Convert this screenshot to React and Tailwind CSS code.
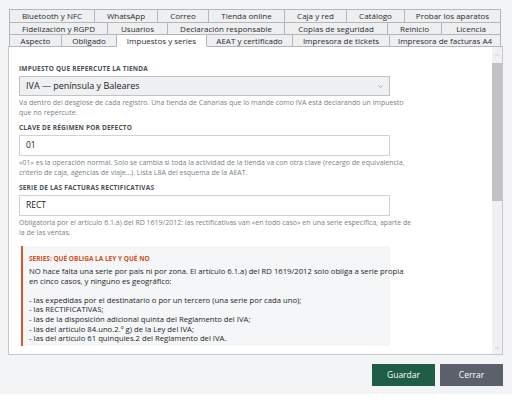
import React from 'react';
import { ChevronDown, ChevronUp } from 'lucide-react';

// Settings tabs, three stacked rows, each row spans the full width
const tabRows = [
  [
    { name: 'Bluetooth y NFC', w: 'w-[86px]' },
    { name: 'WhatsApp', w: 'w-[63px]' },
    { name: 'Correo', w: 'w-[51px]' },
    { name: 'Tienda online', w: 'w-[76px]' },
    { name: 'Caja y red', w: 'w-[62px]' },
    { name: 'Catálogo', w: 'w-[58px]' },
    { name: 'Probar los aparatos', w: 'w-[96px]' },
  ],
  [
    { name: 'Fidelización y RGPD', w: 'w-[99px]' },
    { name: 'Usuarios', w: 'w-[60px]' },
    { name: 'Declaración responsable', w: 'w-[117px]' },
    { name: 'Copias de seguridad', w: 'w-[103px]' },
    { name: 'Reinicio', w: 'w-[54px]' },
    { name: 'Licencia', w: 'w-[59px]' },
  ],
  [
    { name: 'Aspecto', w: 'w-[53px]' },
    { name: 'Obligado', w: 'w-[55px]' },
    { name: 'Impuestos y series', w: 'w-[90px]', active: true },
    { name: 'AEAT y certificado', w: 'w-[86px]' },
    { name: 'Impresora de tickets', w: 'w-[97px]' },
    { name: 'Impresora de facturas A4', w: 'w-[111px]' },
  ],
];

const Label = ({ children, first }) => (
  <div
    className={`${first ? '' : 'mt-[5px]'} mb-[2px] h-[10px] leading-[10px] text-[6.5px] font-bold uppercase tracking-[0.2px] text-[#4a4f57]`}
  >
    {children}
  </div>
);

const Help = ({ lines }) => (
  <div className="mt-[2px] text-[7px] leading-[10px] text-[#7a7f87]">
    {lines.map((l) => (
      <div key={l} className="whitespace-nowrap">{l}</div>
    ))}
  </div>
);

const TextField = ({ value }) => (
  <div className="h-[21px] border border-[#cfd2d6] bg-white flex items-center px-[6px] text-[8.5px] text-[#222]">
    {value}
  </div>
);

const calloutLines = [
  'NO hace falta una serie por país ni por zona. El artículo 6.1.a) del RD 1619/2012 solo obliga a serie propia',
  'en cinco casos, y ninguno es geográfico:',
  '',
  '- las expedidas por el destinatario o por un tercero (una serie por cada uno);',
  '- las RECTIFICATIVAS;',
  '- las de la disposición adicional quinta del Reglamento del IVA;',
  '- las del artículo 84.uno.2.º g) de la Ley del IVA;',
  '- las del artículo 61 quinquies.2 del Reglamento del IVA.',
];

export default function App() {
  return (
    <div className="w-[520px] h-[416px] bg-white font-['Open_Sans','Noto_Sans',sans-serif]">
      <div className="w-[512px] h-[394px] bg-[#f2f4f6] pl-[8px] pr-[9px] pt-[9px] flex flex-col">
        {/* Tabs */}
        <div className="relative z-10 ml-px w-[492px]">
          {tabRows.map((row, ri) => (
            <div key={ri} className={`flex ${ri > 0 ? '-mt-px' : ''}`}>
              {row.map((t, ti) => (
                <div
                  key={t.name}
                  className={`${t.w} ${ri === 0 ? 'h-[14px]' : 'h-[13px]'} flex items-center justify-center border-y border-r border-[#b4b6b9] ${
                    ti === 0 ? 'border-l' : ''
                  } ${t.active ? 'bg-white border-b-white' : 'bg-[#eeeff0]'} text-[8px] text-[#2b2b2b] whitespace-nowrap`}
                >
                  {t.name}
                </div>
              ))}
            </div>
          ))}
        </div>

        {/* Settings panel */}
        <div className="-mt-px h-[309px] border border-[#c4c7cb] bg-white flex">
          <div className="flex-1 overflow-hidden pl-[10px] pt-[17px]">
            <div className="w-[371px]">
              <Label first>Impuesto que repercute la tienda</Label>
              <div className="h-[20px] border border-[#bfc2c6] bg-[#eff0f1] flex items-center justify-between pl-[6px] pr-[5px] text-[9px] text-[#222]">
                <span>IVA — península y Baleares</span>
                <ChevronDown size={7} strokeWidth={2} className="text-[#777]" />
              </div>
              <Help
                lines={[
                  'Va dentro del desglose de cada registro. Una tienda de Canarias que lo mande como IVA está declarando un impuesto',
                  'que no repercute.',
                ]}
              />

              <Label>Clave de régimen por defecto</Label>
              <TextField value="01" />
              <Help
                lines={[
                  '«01» es la operación normal. Solo se cambia si toda la actividad de la tienda va con otra clave (recargo de equivalencia,',
                  'criterio de caja, agencias de viaje...). Lista L8A del esquema de la AEAT.',
                ]}
              />

              <Label>Serie de las facturas rectificativas</Label>
              <TextField value="RECT" />
              <Help
                lines={[
                  'Obligatoria por el artículo 6.1.a) del RD 1619/2012: las rectificativas van «en todo caso» en una serie específica, aparte de',
                  'la de las ventas.',
                ]}
              />

              {/* Legal note */}
              <div className="mt-[8px] ml-[2px] border-l-2 border-[#d4572c] bg-[#f4f6f8] pl-[6px] pt-[8px] pb-[2px]">
                <div className="h-[10px] leading-[10px] text-[6.5px] font-bold uppercase text-[#cf4f24]">
                  Series: qué obliga la ley y qué no
                </div>
                <div className="mt-[3px] text-[7.7px] leading-[9.6px] text-[#1e1e1e]">
                  {calloutLines.map((l, i) => (
                    <div key={i} className="whitespace-nowrap h-[9.6px]">{l}</div>
                  ))}
                </div>
              </div>
            </div>
          </div>

          {/* Scrollbar */}
          <div className="w-[10px] bg-[#f0f0f0] flex flex-col items-center">
            <ChevronUp size={6} strokeWidth={2} className="mt-[5px] text-[#a5a5a5]" />
            <div className="mt-[5px] w-[10px] h-[138px] bg-[#c2c2c2]" />
            <div className="flex-1" />
            <ChevronDown size={6} strokeWidth={2} className="mb-[3px] text-[#a5a5a5]" />
          </div>
        </div>

        {/* Actions */}
        <div className="mt-[9px] flex justify-end gap-[5px]">
          <button className="w-[63px] h-[22px] bg-[#1f5d46] text-white text-[8.5px]">Guardar</button>
          <button className="w-[63px] h-[22px] bg-[#5b606a] text-white text-[8.5px]">Cerrar</button>
        </div>
      </div>
    </div>
  );
}
